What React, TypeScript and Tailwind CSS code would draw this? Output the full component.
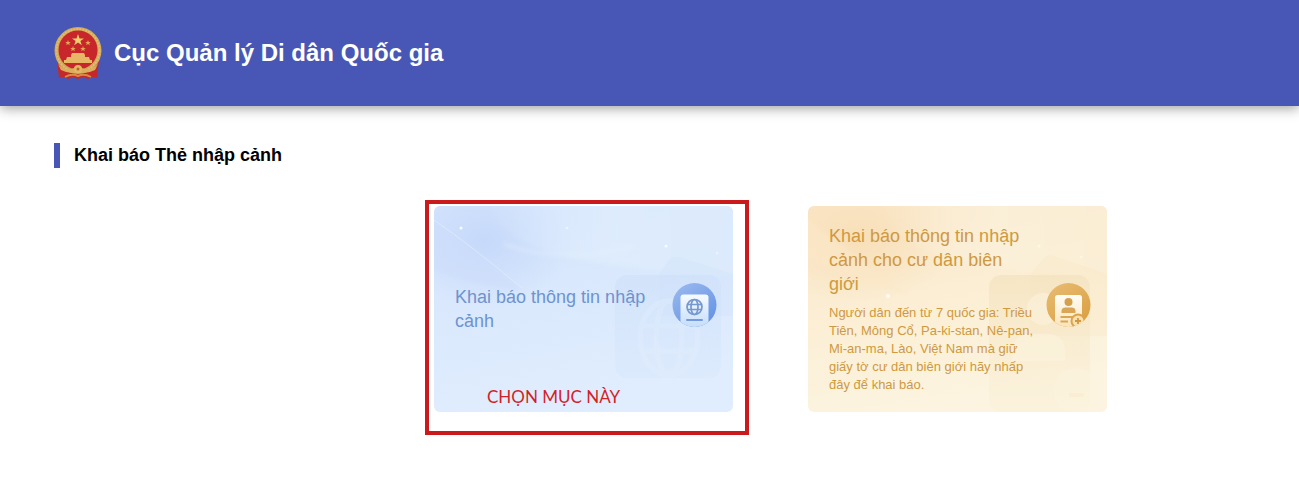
import { ReactNode } from "react";

const Emblem = () => {
  return (
    <svg viewBox="0 0 48 54" className="h-[54px] w-12 shrink-0" aria-hidden="true">
      <path
        d="M3 34 L5 52 Q10 50 14 53 L19 51 L24 53 L29 51 L34 53 Q39 50 43 52 L45 34 Z"
        fill="#c5282b"
      />
      <circle cx="24" cy="24.500" r="23.500" fill="#d0a858" />
      <circle cx="24" cy="24.500" r="21.500" fill="none" stroke="#dfbd72" strokeWidth="2" strokeDasharray="2 1" />
      <circle cx="24" cy="24" r="19.500" fill="#c8262b" />
      <path
        d="M24 8 L25.500 12.400 H30 L26.400 15 L27.800 19.300 L24 16.600 L20.200 19.300 L21.600 15 L18 12.400 H22.500 Z"
        fill="#f0cf6f"
      />
      <g fill="#e0a850">
        <path id="star" d="M14 14 L14.700 16 H16.800 L15.200 17.300 L15.800 19.300 L14 18 L12.200 19.300 L12.800 17.300 L11.200 16 H13.300 Z" />
        <use href="#star" x="20" />
        <use href="#star" x="5" y="6" />
        <use href="#star" x="15" y="6" />
      </g>
      <path
        d="M17 29 L18 27 H30 L31 29 V31 H35 L36 34 H38 V37 H10 V34 H12 L13 31 H17 Z"
        fill="#e7b765"
      />
      <path
        d="M4 38 Q12 46 20 42 Q24 38 28 42 Q36 46 44 38 L41 44 Q31 49 24 45 Q17 49 7 44 Z"
        fill="#dcae5c"
      />
      <circle cx="24" cy="43" r="4" fill="#e3b861" />
      <circle cx="24" cy="43" r="1.500" fill="#b9652f" />
      <path d="M11 51 Q18 47 24 50 Q30 47 37 51" fill="none" stroke="#d78b42" strokeWidth="2" />
    </svg>
  );
};

const PassportIcon = () => {
  return (
    <svg viewBox="0 0 45 45" className="size-[45px]" aria-hidden="true">
      <defs>
        <linearGradient id="blueDisc" x1="0" y1="0" x2="0.700" y2="1">
          <stop offset="0" stopColor="#9dbcef" />
          <stop offset="1" stopColor="#6593e5" />
        </linearGradient>
        <linearGradient id="bluePage" x1="0" y1="0" x2="0" y2="1">
          <stop offset="0" stopColor="#f7fbff" />
          <stop offset="1" stopColor="#c3dcfa" />
        </linearGradient>
        <clipPath id="blueClip">
          <circle cx="22.500" cy="22" r="22" />
        </clipPath>
      </defs>
      <circle cx="22.500" cy="22" r="22" fill="url(#blueDisc)" />
      <g clipPath="url(#blueClip)">
        <rect x="8.500" y="11.500" width="28" height="34" rx="3" fill="url(#bluePage)" />
        <g fill="none" stroke="#7798cf" strokeWidth="1.700">
          <circle cx="22.500" cy="24" r="7.500" />
          <ellipse cx="22.500" cy="24" rx="3.500" ry="7.500" />
          <path d="M15.500 21.500 H29.500 M15.500 26.500 H29.500" />
        </g>
        <path d="M15 37 H30" stroke="#769bdc" strokeWidth="2" strokeLinecap="round" />
      </g>
    </svg>
  );
};

const ResidentIcon = () => {
  return (
    <svg viewBox="0 0 45 45" className="size-[45px]" aria-hidden="true">
      <defs>
        <linearGradient id="goldDisc" x1="0" y1="0" x2="0.700" y2="1">
          <stop offset="0" stopColor="#e9bd74" />
          <stop offset="1" stopColor="#daa044" />
        </linearGradient>
        <linearGradient id="goldPage" x1="0" y1="0" x2="0" y2="1">
          <stop offset="0" stopColor="#fffdf7" />
          <stop offset="1" stopColor="#fae2b4" />
        </linearGradient>
        <clipPath id="goldClip">
          <circle cx="22.500" cy="22" r="22" />
        </clipPath>
      </defs>
      <circle cx="22.500" cy="22" r="22" fill="url(#goldDisc)" />
      <g clipPath="url(#goldClip)">
        <rect x="9" y="12" width="27" height="34" rx="2.500" fill="url(#goldPage)" />
        <circle cx="22.500" cy="19" r="4" fill="#d5a04d" />
        <path d="M15.500 30 V28 Q15.500 24.500 19.500 24.500 H25.500 Q29.500 24.500 29.500 28 V30 Z" fill="#d9a655" />
        <path d="M14.500 34 H27 M14.500 38.500 H22" stroke="#dca650" strokeWidth="2" />
        <circle cx="32" cy="38" r="6.500" fill="#f9e0b0" stroke="#dba44c" strokeWidth="2" />
        <path d="M29 38 H35 M32 35 V41" stroke="#d29a3f" strokeWidth="1.800" />
      </g>
    </svg>
  );
};

const BlueBackdrop = () => {
  return (
    <svg
      viewBox="0 0 299 206"
      preserveAspectRatio="none"
      className="absolute inset-0 size-full"
      aria-hidden="true"
    >
      <defs>
        <linearGradient id="blueBase" x1="0" y1="0" x2="0.300" y2="1">
          <stop offset="0" stopColor="#d4e4fc" />
          <stop offset="0.450" stopColor="#d9e8fc" />
          <stop offset="1" stopColor="#e0edfe" />
        </linearGradient>
        <radialGradient id="blueGlow">
          <stop offset="0" stopColor="#c6d9fa" />
          <stop offset="1" stopColor="#c6d9fa" stopOpacity="0" />
        </radialGradient>
        <linearGradient id="blueWave" x1="0" y1="0" x2="1" y2="0">
          <stop offset="0" stopColor="#dfedfd" stopOpacity="0" />
          <stop offset="0.500" stopColor="#dfedfd" />
          <stop offset="1" stopColor="#dcebfc" />
        </linearGradient>
        <linearGradient id="blueGhost" x1="0" y1="0" x2="0" y2="1">
          <stop offset="0" stopColor="#cde0f9" stopOpacity="0.600" />
          <stop offset="1" stopColor="#d7e6fb" stopOpacity="0.400" />
        </linearGradient>
        <filter id="blueSoft">
          <feGaussianBlur stdDeviation="2" />
        </filter>
      </defs>
      <rect width="299" height="206" fill="url(#blueBase)" />
      <ellipse cx="50" cy="35" rx="90" ry="65" fill="url(#blueGlow)" />
      <g filter="url(#blueSoft)">
        <path d="M-5 10 Q30 38 90 85 Q40 80 -5 62 Z" fill="#cdddfb" opacity="0.600" />
        <path d="M50 -10 Q65 30 110 44 Q160 62 310 72 V-10 Z" fill="url(#blueWave)" opacity="0.800" />
        <path d="M70 38 Q130 60 200 40" fill="none" stroke="#e6f2fe" strokeWidth="2" opacity="0.600" />
      </g>
      <path d="M0 14 Q35 38 88 82" fill="none" stroke="#e2edfe" strokeWidth="1" opacity="0.700" />
      <path d="M225 69 L235 54 Q239 49 245 51 L299 68 V110 H225 Z" fill="#cbdff8" opacity="0.250" />
      <rect x="181" y="69" width="106" height="103" rx="12" fill="url(#blueGhost)" />
      <g fill="none" stroke="#e4effe" strokeWidth="5" opacity="0.350">
        <ellipse cx="235" cy="132" rx="29" ry="37" />
        <ellipse cx="235" cy="132" rx="13" ry="37" />
        <path d="M208 120 H262 M208 145 H262" />
      </g>
      <g fill="#f7fbff">
        <circle cx="27" cy="22" r="1.500" />
        <circle cx="133" cy="22" r="1.300" opacity="0.700" />
        <circle cx="232" cy="40" r="1.500" />
        <circle cx="283" cy="47" r="1.300" opacity="0.500" />
      </g>
    </svg>
  );
};

const GoldBackdrop = () => {
  return (
    <svg
      viewBox="0 0 299 206"
      preserveAspectRatio="none"
      className="absolute inset-0 size-full"
      aria-hidden="true"
    >
      <defs>
        <linearGradient id="goldBase" x1="0" y1="0" x2="0.300" y2="1">
          <stop offset="0" stopColor="#fae6c8" />
          <stop offset="0.500" stopColor="#fbeed4" />
          <stop offset="1" stopColor="#fcf4e0" />
        </linearGradient>
        <radialGradient id="goldGlow">
          <stop offset="0" stopColor="#f8dfb8" />
          <stop offset="1" stopColor="#f8dfb8" stopOpacity="0" />
        </radialGradient>
        <linearGradient id="goldWave" x1="0" y1="0" x2="1" y2="0">
          <stop offset="0" stopColor="#fbf0da" stopOpacity="0" />
          <stop offset="0.500" stopColor="#fbf0da" />
          <stop offset="1" stopColor="#fbeed5" />
        </linearGradient>
        <linearGradient id="goldGhost" x1="0" y1="0" x2="0" y2="1">
          <stop offset="0" stopColor="#f3e2be" stopOpacity="0.700" />
          <stop offset="1" stopColor="#f8ebcc" stopOpacity="0.200" />
        </linearGradient>
        <filter id="goldSoft">
          <feGaussianBlur stdDeviation="2" />
        </filter>
      </defs>
      <rect width="299" height="206" fill="url(#goldBase)" />
      <ellipse cx="50" cy="32" rx="100" ry="65" fill="url(#goldGlow)" />
      <g filter="url(#goldSoft)">
        <path d="M-5 10 Q30 38 100 88 Q40 72 -5 50 Z" fill="#fbe8c8" opacity="0.600" />
        <path d="M70 -10 Q85 30 120 46 Q170 64 310 74 V-10 Z" fill="url(#goldWave)" opacity="0.800" />
      </g>
      <path d="M222 69 L236 52 Q240 48 246 50 L299 68 V130 H222 Z" fill="#f6e2bb" opacity="0.250" />
      <rect x="181" y="69" width="101" height="137" rx="12" fill="url(#goldGhost)" />
      <g fill="#fcf3de" opacity="0.600">
        <circle cx="235" cy="103" r="16" />
        <path d="M204 155 V146 Q204 128 224 128 H240 Q257 128 257 146 V155 Z" />
        <circle cx="268" cy="185" r="23" />
      </g>
      <path d="M261 189 H276" stroke="#f9e8c6" strokeWidth="4" opacity="0.400" />
      <g fill="#fffaf0">
        <circle cx="80" cy="90" r="2" />
        <circle cx="231" cy="40" r="1.500" opacity="0.700" />
        <circle cx="273" cy="51" r="1.300" opacity="0.600" />
      </g>
    </svg>
  );
};

type CardProps = {
  title: string;
  text?: string;
  icon: ReactNode;
  backdrop: ReactNode;
  className: string;
};

const Card = ({ title, text, icon, backdrop, className }: CardProps) => {
  return (
    <a
      href="#"
      className={`relative flex min-h-[206px] items-center justify-between overflow-hidden rounded-md py-4 pr-4 pl-[21px] ${className}`}
    >
      {backdrop}
      <div className="relative w-[206px]">
        <h3 className="text-lg leading-6">{title}</h3>
        {text && <p className="mt-2 text-[13px] leading-[18px]">{text}</p>}
      </div>
      <div className="relative shrink-0 pb-2">{icon}</div>
    </a>
  );
};

const App = () => {
  return (
    <div className="min-h-screen bg-white font-['Liberation_Sans',Arial,sans-serif]">
      <header className="flex h-[106px] items-center gap-3 bg-[#4857b5] px-[54px] shadow-[0_2px_12px_rgba(0,0,0,0.4)]">
        <Emblem />
        <h1 className="text-2xl font-bold text-white">Cục Quản lý Di dân Quốc gia</h1>
      </header>

      <main className="px-[54px] pt-[37px] pb-10">
        <h2 className="border-l-6 border-[#4857b5] pl-[14px] text-lg leading-[25px] font-bold text-black">
          Khai báo Thẻ nhập cảnh
        </h2>

        <div className="mt-[38px] flex flex-wrap justify-center gap-[75px] md:pl-[242px]">
          <div className="relative w-[299px]">
            <Card
              title="Khai báo thông tin nhập cảnh"
              icon={<PassportIcon />}
              backdrop={<BlueBackdrop />}
              className="text-[#6e93cf]"
            />
            <div className="pointer-events-none absolute -top-[6px] -right-4 -bottom-[23px] -left-[9px] flex items-end border-4 border-[#cb1a1c] pb-5 pl-[58px]">
              <p className="font-['Lato',sans-serif] text-[17px] leading-7 text-[#d21f28]">CHỌN MỤC NÀY</p>
            </div>
          </div>

          <Card
            title="Khai báo thông tin nhập cảnh cho cư dân biên giới"
            text="Người dân đến từ 7 quốc gia: Triều Tiên, Mông Cổ, Pa-ki-stan, Nê-pan, Mi-an-ma, Lào, Việt Nam mà giữ giấy tờ cư dân biên giới hãy nhấp đây để khai báo."
            icon={<ResidentIcon />}
            backdrop={<GoldBackdrop />}
            className="w-[299px] text-[#cf993f]"
          />
        </div>
      </main>
    </div>
  );
};

export default App;
